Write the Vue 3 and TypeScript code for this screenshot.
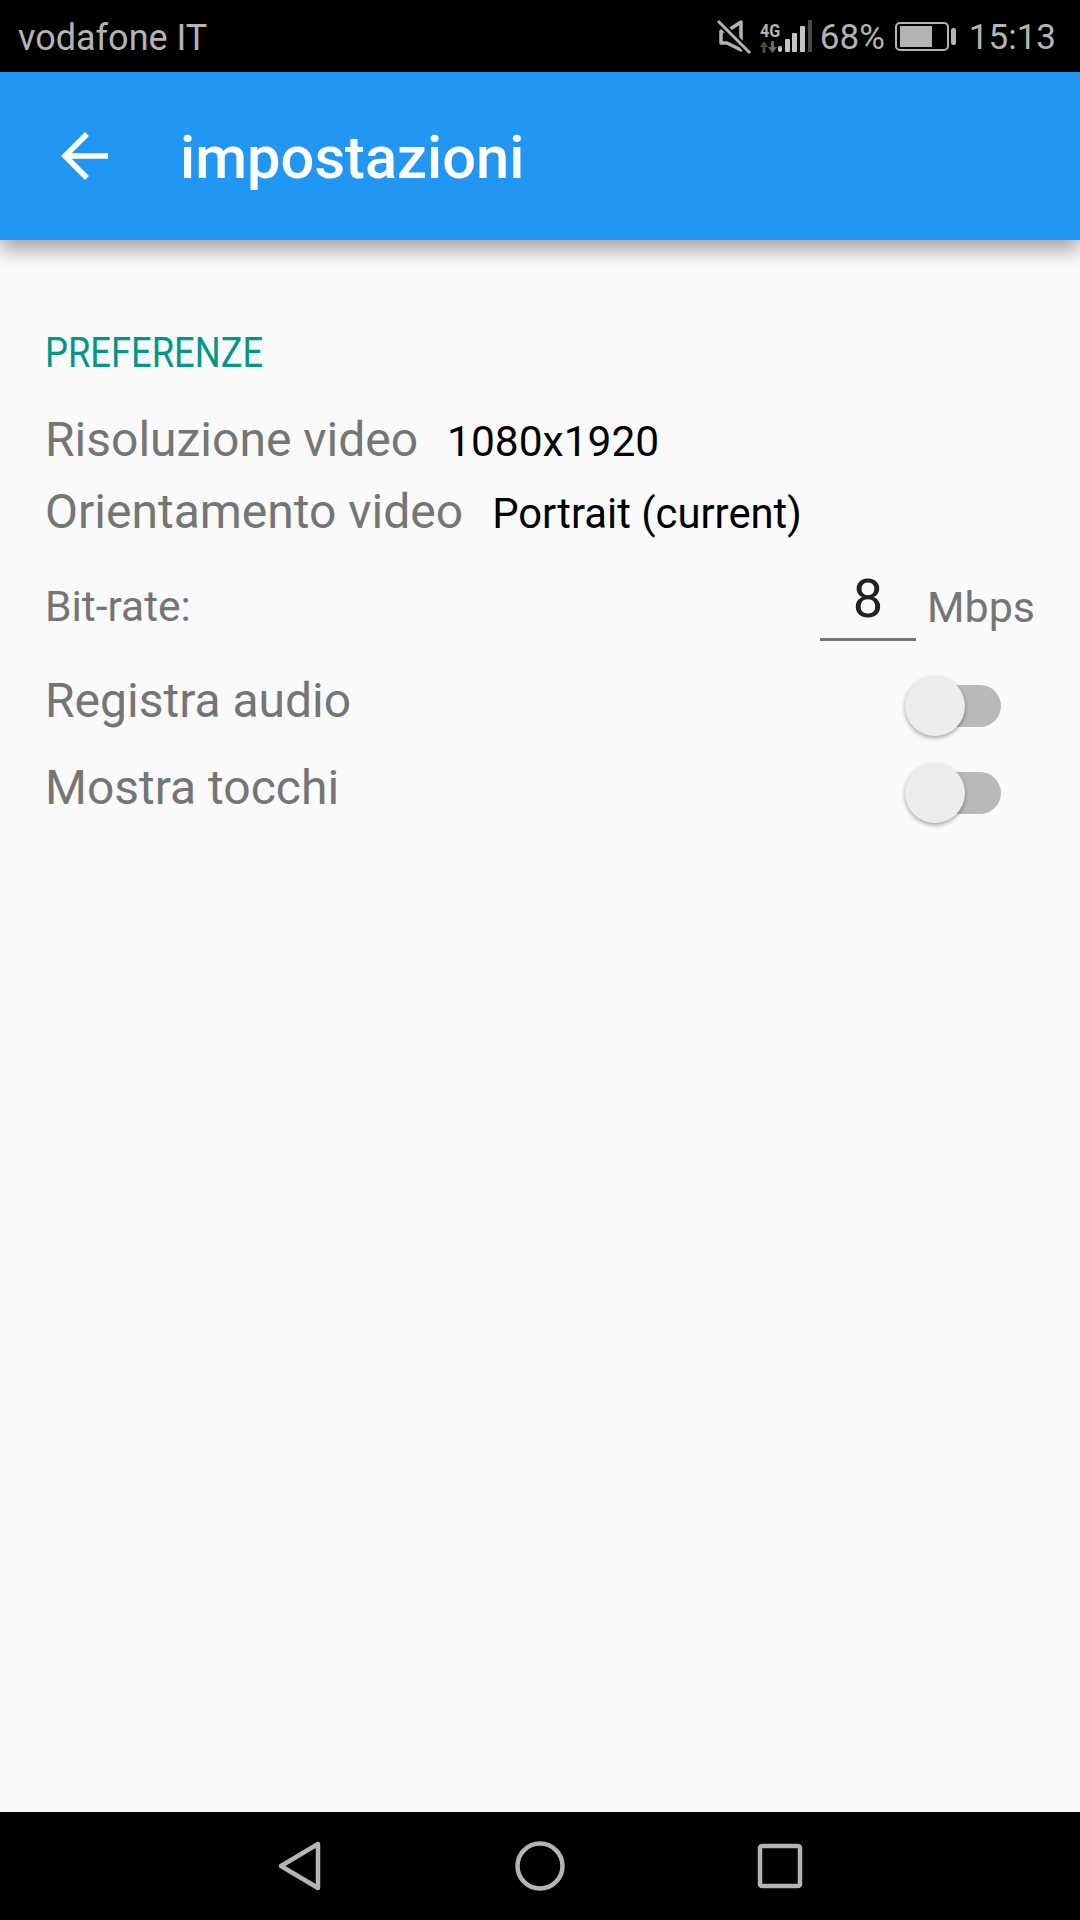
<script setup lang="ts">
import { ref } from 'vue'

const recordAudio = ref(false)
const showTouches = ref(false)
const bitrate = ref('8')
</script>

<template>
  <div class="screen">
    <header class="status-bar">
      <span class="carrier">vodafone IT</span>
      <div class="status-icons">
        <svg class="icon-mute" width="36" height="36" viewBox="0 0 36 36" fill="none">
          <path d="M5 12 H11 L25 3 V31 L11 24 H5 Z" stroke="#b4b4b4" stroke-width="3.5" stroke-linejoin="round" />
          <path d="M2 2 L35 35" stroke="#000" stroke-width="7" />
          <path d="M2 2 L34 34" stroke="#b4b4b4" stroke-width="3" />
        </svg>
        <div class="network">
          <span class="net-label">4G</span>
          <svg width="18" height="12" viewBox="0 0 18 12">
            <path d="M4 0 L8 6 H5.5 V12 H2.5 V6 H0 Z" fill="#4a4a4a" />
            <path d="M11 0 H14 V6 H17 L12.5 12 L8 6 H11 Z" fill="#6a6a6a" />
          </svg>
        </div>
        <svg class="icon-signal" width="34" height="34" viewBox="0 0 34 34">
          <rect x="0" y="26" width="4" height="6" rx="2" fill="#c4c4c4" />
          <rect x="7" y="19" width="5" height="13" rx="1" fill="#c4c4c4" />
          <rect x="14" y="13" width="5" height="19" rx="1" fill="#c4c4c4" />
          <rect x="22" y="6" width="5" height="26" rx="1" fill="#c4c4c4" />
          <rect x="30" y="0" width="4" height="32" fill="#4a4a4a" />
        </svg>
        <span class="percent">68%</span>
        <svg class="icon-battery" width="62" height="30" viewBox="0 0 62 30">
          <rect x="1" y="1" width="52" height="27" rx="4" fill="none" stroke="#b4b4b4" stroke-width="2" />
          <rect x="5" y="4" width="32" height="21" fill="#b4b4b4" />
          <rect x="56" y="6" width="5" height="17" rx="2" fill="#b4b4b4" />
        </svg>
        <span class="clock">15:13</span>
      </div>
    </header>

    <div class="toolbar">
      <svg class="back" width="48" height="48" viewBox="0 0 48 48" fill="none">
        <path d="M47 24 H5 M26 2 L4 24 L26 46" stroke="#fff" stroke-width="5.5" />
      </svg>
      <h1 class="title">impostazioni</h1>
    </div>

    <main class="content">
      <h2 class="section">PREFERENZE</h2>

      <div class="pref pref-video">
        <span class="label">Risoluzione video</span>
        <span class="value">1080x1920</span>
      </div>
      <div class="pref pref-orient">
        <span class="label">Orientamento video</span>
        <span class="value">Portrait (current)</span>
      </div>

      <div class="bitrate">
        <span class="bitrate-label">Bit-rate:</span>
        <div class="bitrate-field">{{ bitrate }}</div>
        <span class="unit">Mbps</span>
      </div>

      <div class="switch-row first">
        <span class="label">Registra audio</span>
        <button class="switch" :class="{ on: recordAudio }" @click="recordAudio = !recordAudio">
          <span class="thumb"></span>
        </button>
      </div>
      <div class="switch-row">
        <span class="label">Mostra tocchi</span>
        <button class="switch" :class="{ on: showTouches }" @click="showTouches = !showTouches">
          <span class="thumb"></span>
        </button>
      </div>
    </main>

    <nav class="nav-bar">
      <svg width="50" height="54" viewBox="0 0 50 54" fill="none">
        <path d="M43 5 V49 L6 27 Z" stroke="#b4b4b4" stroke-width="4.5" stroke-linejoin="round" />
      </svg>
      <svg width="50" height="54" viewBox="0 0 50 54" fill="none">
        <circle cx="25" cy="27" r="22.5" stroke="#b4b4b4" stroke-width="4.5" />
      </svg>
      <svg width="50" height="54" viewBox="0 0 50 54" fill="none">
        <rect x="5" y="7" width="40" height="40" rx="2" stroke="#b4b4b4" stroke-width="4.5" />
      </svg>
    </nav>
  </div>
</template>

<style>
html,
body {
  margin: 0;
  padding: 0;
}
</style>

<style scoped>
.screen {
  width: 1080px;
  height: 1920px;
  display: flex;
  flex-direction: column;
  overflow: hidden;
  background: #fafafa;
  font-family: Roboto, "Liberation Sans", sans-serif;
}

.status-bar {
  height: 72px;
  flex: none;
  background: #000;
  color: #b4b4b4;
  display: flex;
  align-items: center;
  justify-content: space-between;
  padding: 2px 24px 0 18px;
  box-sizing: border-box;
}

.carrier {
  font-size: 36px;
  margin-top: 2px;
}

.status-icons {
  display: flex;
  align-items: center;
}

.icon-mute {
  margin-right: 8px;
}

.network {
  display: flex;
  flex-direction: column;
  align-items: flex-start;
  width: 18px;
}

.net-label {
  font-size: 19px;
  line-height: 20px;
  font-weight: 700;
  transform: scaleX(0.85);
  transform-origin: left center;
}

.percent {
  font-size: 35px;
  margin-left: 8px;
  margin-right: 10px;
}

.clock {
  font-size: 35px;
  margin-left: 12px;
}

.toolbar {
  height: 168px;
  flex: none;
  background: #2196f3;
  display: flex;
  align-items: center;
  padding-left: 61px;
  box-shadow: 0 10px 18px rgba(0, 0, 0, 0.34);
  position: relative;
}

.back {
  margin-top: -1px;
}

.title {
  margin: 4px 0 0 71px;
  font-size: 59.6px;
  font-weight: 500;
  color: #fff;
}

.content {
  flex: 1;
  padding: 87px 45px 0;
}

.section {
  margin: 0;
  font-size: 42px;
  line-height: 52px;
  font-weight: 400;
  transform: scaleX(0.865);
  transform-origin: left center;
  color: #009688;
}

.pref {
  display: flex;
  align-items: baseline;
  height: 72px;
}

.pref-video {
  margin-top: 25px;
}

.label {
  font-size: 48px;
  line-height: 72px;
  color: #757575;
}

.value {
  font-size: 42.5px;
  color: #000;
  margin-left: 29px;
}

.pref-orient .value {
  font-size: 41.8px;
}

.bitrate {
  display: flex;
  align-items: flex-start;
  margin-top: 19px;
  height: 74px;
}

.bitrate-label {
  font-size: 42.5px;
  line-height: 50px;
  margin-top: 15px;
  color: #757575;
  margin-right: auto;
}

.bitrate-field {
  width: 96px;
  height: 74px;
  box-sizing: border-box;
  border-bottom: 3px solid #757575;
  text-align: center;
  font-size: 54px;
  line-height: 64px;
  color: #212121;
}

.unit {
  font-size: 43px;
  line-height: 50px;
  margin-top: 15px;
  color: #757575;
  margin-left: 11px;
}

.switch-row {
  display: flex;
  align-items: center;
  justify-content: space-between;
  height: 87px;
  padding-right: 34px;
}

.switch-row.first {
  margin-top: 21px;
}

.switch-row .label {
  margin-top: -10px;
}

.switch {
  position: relative;
  width: 96px;
  height: 42px;
  padding: 0;
  border: 0;
  border-radius: 21px;
  background: transparent;
  cursor: pointer;
}

.switch::before {
  content: "";
  position: absolute;
  top: 0;
  right: 0;
  width: 84px;
  height: 42px;
  border-radius: 21px;
  background: #b9b9b9;
}

.thumb {
  position: absolute;
  left: 0;
  top: -9px;
  width: 60px;
  height: 60px;
  border-radius: 50%;
  background: #ececec;
  box-shadow: 0 2px 4px rgba(0, 0, 0, 0.35);
}

.nav-bar {
  height: 108px;
  flex: none;
  background: #000;
  display: flex;
  align-items: center;
  justify-content: center;
  gap: 190px;
}
</style>
